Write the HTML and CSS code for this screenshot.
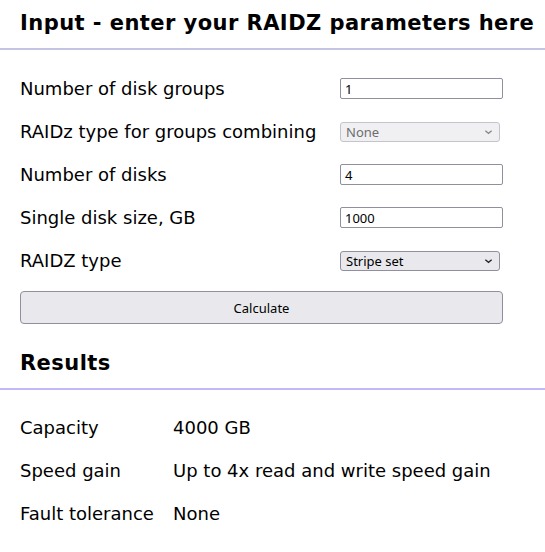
FILE: index.html
```html
<!DOCTYPE html>
<html>
<head>
<meta charset="utf-8">
<link rel="stylesheet" href="styles.css">
</head>
<body>
<h2 class="section-title">Input - enter your RAIDZ parameters here</h2>
<div class="form">
  <div class="row">
    <label class="label">Number of disk groups</label>
    <input class="field" type="text" value="1">
  </div>
  <div class="row">
    <label class="label">RAIDz type for groups combining</label>
    <div class="select disabled"><span>None</span><svg viewBox="0 0 10 6" class="chev"><path d="M1.5 1.5 L5 4.5 L8.5 1.5" /></svg></div>
  </div>
  <div class="row">
    <label class="label">Number of disks</label>
    <input class="field" type="text" value="4">
  </div>
  <div class="row">
    <label class="label">Single disk size, GB</label>
    <input class="field" type="text" value="1000">
  </div>
  <div class="row">
    <label class="label">RAIDZ type</label>
    <div class="select"><span>Stripe set</span><svg viewBox="0 0 10 6" class="chev"><path d="M1.5 1.5 L5 4.5 L8.5 1.5" /></svg></div>
  </div>
  <button class="btn">Calculate</button>
</div>
<h2 class="section-title results-title">Results</h2>
<div class="results">
  <div class="rrow"><span class="rlabel">Capacity</span><span>4000 GB</span></div>
  <div class="rrow"><span class="rlabel">Speed gain</span><span>Up to 4x read and write speed gain</span></div>
  <div class="rrow"><span class="rlabel">Fault tolerance</span><span>None</span></div>
</div>
</body>
</html>
```
FILE: styles.css
```css
html, body { margin: 0; padding: 0; background: #fff; }
body { font-family: "DejaVu Sans", sans-serif; color: #000; }
.section-title {
  margin: 0;
  padding: 9px 0 0 20px;
  box-sizing: border-box;
  font-size: 21px;
  letter-spacing: 0.45px;
  font-weight: bold;
  line-height: 29px;
  white-space: nowrap;
  border-bottom: 2px solid #c4c4e4;
  height: 50px;
}
.results-title { border-bottom-color: #c0b8f8; margin-top: 25px; padding-top: 0; height: 41px; }
.form { padding: 17px 20px 0 20px; }
.row { display: flex; align-items: center; height: 43px; }
.label { width: 320px; font-size: 18px; white-space: nowrap; }
.field {
  width: 163px; height: 21px; box-sizing: border-box;
  border: 1px solid #8f8f9d; border-radius: 2px;
  font-family: "Noto Sans", sans-serif; font-size: 13px; padding: 0 4px; margin: 0;
  color: #000; background: #fff;
}
.select {
  width: 160px; height: 20px; box-sizing: border-box;
  border: 1px solid #8f8f9d; border-radius: 3px; background: #e9e9ed;
  font-family: "Noto Sans", sans-serif; font-size: 13px;
  display: flex; align-items: center; justify-content: space-between; padding: 0 6px 0 5px;
}
.select.disabled { color: #6d6d6d; border-color: #c4c4cc; background: #f0f0f2; }
.chev { width: 9px; height: 6px; fill: none; stroke: #222; stroke-width: 1.4; }
.disabled .chev { stroke: #888; }
.btn {
  display: block; width: 483px; height: 33px; margin-top: 9px;
  border: 1px solid #8f8f9d; border-radius: 4px; background: #e9e9ed;
  font-family: "Noto Sans", sans-serif; font-size: 13px; color: #000;
}
.results { padding: 16px 20px 0 20px; }
.rrow { display: flex; align-items: center; height: 43px; font-size: 18px; white-space: nowrap; }
.rlabel { width: 153px; }
```
